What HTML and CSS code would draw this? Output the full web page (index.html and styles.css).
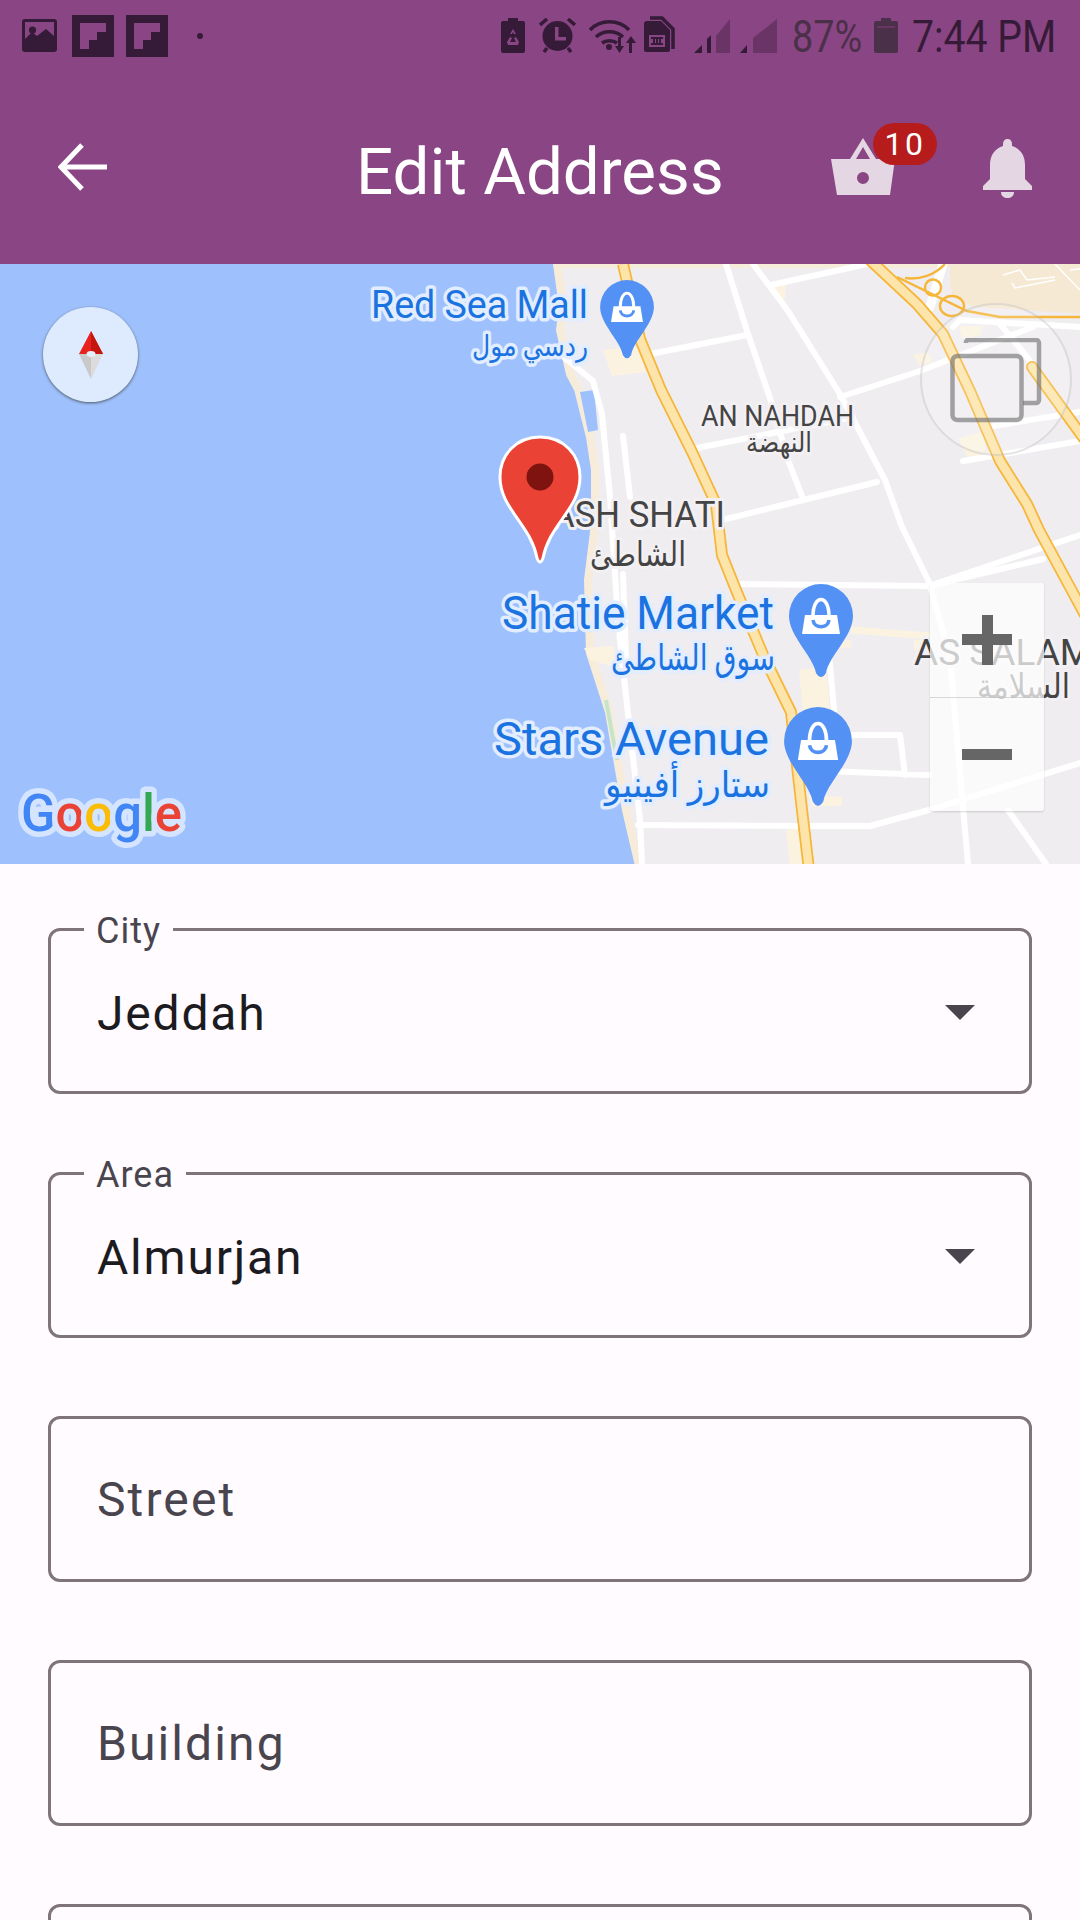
FILE: index.html
```html
<!DOCTYPE html>
<html lang="en">
<head>
<meta charset="utf-8">
<title>Edit Address</title>
<link rel="stylesheet" href="styles.css">
</head>
<body>
<div class="page">
  <header class="header">
    <div class="status">
      <div class="status-left">
        <svg class="ic-image" viewBox="0 0 35 33"><path class="dark" fill-rule="evenodd" d="M3 0h29a3 3 0 0 1 3 3v27a3 3 0 0 1-3 3H3a3 3 0 0 1-3-3V3a3 3 0 0 1 3-3zM3 3v17l7-7 5 4 9-7 8 7V3z"/><circle class="dark" cx="10.500" cy="11" r="3.600"/></svg>
        <svg class="ic-flip" viewBox="0 0 42 42"><path class="dark" fill-rule="evenodd" d="M0 0h42v42H0zM8 8v26h9v-9h8v-8h9V8z"/></svg>
        <svg class="ic-flip" viewBox="0 0 42 42"><path class="dark" fill-rule="evenodd" d="M0 0h42v42H0zM8 8v26h9v-9h8v-8h9V8z"/></svg>
        <span class="status-dot"></span>
      </div>
      <div class="status-right">
        <svg class="ic-batsave" viewBox="0 0 24 35"><path class="dark" d="M7 0h10v3h5a2 2 0 0 1 2 2v28a2 2 0 0 1-2 2H2a2 2 0 0 1-2-2V5a2 2 0 0 1 2-2h5z"/><path class="hole" d="M12 11l3 5h-2l-1-2-1 2H9zM6 24l3-5 2 1-2 4h3v3H7zM18 24l-3-5-2 1 2 4h-3v3h5z"/></svg>
        <svg class="ic-alarm" viewBox="0 0 37 35"><circle class="dark" cx="18.500" cy="18" r="15"/><path class="hole" d="M16 9h3.500v10H27v3.500H16z"/><path class="stroke-dark" d="M1 7l7-6M36 7l-7-6M5 34l3-4M32 34l-3-4"/></svg>
        <svg class="ic-wifi" viewBox="0 0 48 36"><path class="stroke-dark" d="M1 13C11 2 30 2 40 13M7 20c7-7 20-7 27 0M13 26c4-3 11-3 15 0"/><circle class="dark" cx="20" cy="30" r="3"/><path class="dark" d="M29 20h3v9h3l-4.500 7-4.500-7h3zM40 36h3v-10h4l-5-7-5 7h3z"/></svg>
        <svg class="ic-sim" viewBox="0 0 31 36"><path class="stroke-dark" d="M6 2h12l11 11v20" fill="none"/><path class="dark" d="M3 5h14l9 9v20a2 2 0 0 1-2 2H2a2 2 0 0 1-2-2V8a3 3 0 0 1 3-3z"/><path class="hole" fill-rule="evenodd" d="M5 19h16v12H5zM7 21v2h2v4H7v2h12v-2h-2v-4h2v-2zM11 23h1v4h-1zM14 23h1v4h-1z"/></svg>
        <svg class="ic-sig" viewBox="0 0 37 36"><path class="dim" d="M22 19L36 2v34H22z"/><path class="dark" d="M0 36l8-8v8zM13 36V22l4-4v18z"/></svg>
        <svg class="ic-sig ic-sig-2" viewBox="0 0 37 36"><path class="dim" d="M13 21L37 2v34H13z"/><path class="dark" d="M0 36l7-8v8z"/></svg>
        <span class="status-pct">87%</span>
        <svg class="ic-battery" viewBox="0 0 24 35"><path class="bat" d="M7 0h10v3h5a2 2 0 0 1 2 2v28a2 2 0 0 1-2 2H2a2 2 0 0 1-2-2V5a2 2 0 0 1 2-2h5z"/><rect class="bat-line" x="3" y="8" width="18" height="2"/></svg>
        <span class="status-time">7:44 PM</span>
      </div>
    </div>
    <div class="appbar">
      <svg class="ic-back" viewBox="0 0 50 48"><path d="M49 24H4M24 2L3 24l21 22"/></svg>
      <h1 class="title">Edit Address</h1>
      <div class="cart">
        <svg class="ic-basket" viewBox="0 0 64 57"><path class="basket-body" fill-rule="evenodd" d="M0 21h19L32 0l13 21h19l-5 36H6zM25 21h14L32 9zM32 34a6 6 0 1 0 0 12 6 6 0 0 0 0-12z"/></svg>
        <span class="badge">10</span>
      </div>
      <svg class="ic-bell" viewBox="0 0 49 59"><path d="M24.500 0c-3 0-4.500 2-4.500 5v2C11 10 7 17 7 26v14L0 47v4h49v-4l-7-7V26c0-9-4-16-13-19V5c0-3-1.500-5-4.500-5zM18 53h13c0 4-3 6-6.500 6S18 57 18 53z"/></svg>
    </div>
  </header>

  <section class="map">
    <svg class="map-canvas" viewBox="0 264 1080 600">
      <rect x="0" y="264" width="1080" height="600" class="water"/>
      <path class="land" d="M557 264L563 307 560 330 570 374 578 389 590 437 595 470 595 524 588 580 590 653 609 712 626 810 640 870H1085V264z"/>
      <path class="water" d="M580 392L594 390 598 430 588 432z"/>
      <path class="campus" d="M950 264H1085V314L973 307 953 297 950 284z"/>
      <path class="campus-line" d="M1003 275L1020 270 1027 280 1055 277M1012 283L1015 288 1055 280M1055 264L1080 290M1070 270L1085 268"/>
      <path class="tan" d="M603 350L640 346 645 372 612 376zM913 355L928 352 932 362 920 366zM959 326L983 326 980 336 962 338zM958 438L986 431 984 458 970 461zM799 670L826 667 830 712 803 712zM584 648L613 646 618 668 590 660zM786 830L806 826 808 864 790 864zM808 795L842 797 842 806 812 806zM772 286L786 284 784 304zM914 640L928 640 928 650 914 650z"/>
      <path class="road-tan" d="M851 630L930 636M829 644L851 644"/>
      <path class="green" d="M606 700L617 760M556 300L566 320"/>
      <g class="roads">
        <path d="M560 354L593 381 602 414 610 497 618 620 622 660 640 820 642 864"/>
        <path d="M623 436L630 497M623 574L626 660"/>
        <path d="M726 264L747 331 770 398 788 460 802 496"/>
        <path d="M753 264L788 311 840 394 885 480 902 527 929 582 950 657 968 864"/>
        <path d="M650 354L747 335M771 285L867 264M692 449L853 417M840 397L920 371 1033 327M722 520L877 482"/>
        <path d="M736 584L929 586 1043 559M929 586L1080 535"/>
        <path d="M638 825L808 826 870 826 929 810 1080 763"/>
        <path d="M847 735L900 735 905 775M826 771L929 775M829 654L836 732"/>
        <path d="M953 327L960 320 1080 327M1000 324L1027 357M1027 357L1080 434M1008 810L1046 864"/>
        <path d="M987 427L1080 412M963 461L1080 441"/>
      </g>
      <path class="road-thick" d="M943 264L930 307"/>
      <path class="loops" d="M897 277L967 311 1000 317H1085M905 278C920 280 935 275 945 264M925 287a8 8 0 1 0 16 1a8 8 0 1 0-16-1M940 305a12 10 0 1 0 24 2a12 10 0 1 0-24-2"/>
      <path class="hw-edge" d="M623 264L640 339 661 390 692 452 716 504 722 555 736 590 764 657 791 712 802 810 809 870"/>
      <path class="hw-fill" d="M623 264L640 339 661 390 692 452 716 504 722 555 736 590 764 657 791 712 802 810 809 870"/>
      <path class="hw-edge" d="M870 260L917 304 943 334 970 391 1000 461 1027 504 1039 530 1085 615"/>
      <path class="hw-fill" d="M870 260L917 304 943 334 970 391 1000 461 1027 504 1039 530 1085 615"/>
      <path class="hw-edge hw-cap" d="M1032 367L1085 440"/>
      <path class="hw-fill hw-cap" d="M1032 367L1085 440"/>

      <text class="lbl-poi lbl-md" x="371" y="318" textLength="217" lengthAdjust="spacingAndGlyphs">Red Sea Mall</text>
      <text class="lbl-poi lbl-ar-sm" x="472" y="356" textLength="116" lengthAdjust="spacingAndGlyphs">ردسي مول</text>
      <text class="lbl-area" x="701" y="426" textLength="153" lengthAdjust="spacingAndGlyphs">AN NAHDAH</text>
      <text class="lbl-area-ar" x="746" y="452" textLength="66" lengthAdjust="spacingAndGlyphs">النهضة</text>
      <text class="lbl-area lbl-area-lg" x="552" y="527" textLength="173" lengthAdjust="spacingAndGlyphs">ASH SHATI</text>
      <text class="lbl-area-ar lbl-area-ar-lg" x="590" y="566" textLength="96" lengthAdjust="spacingAndGlyphs">الشاطئ</text>
      <text class="lbl-poi lbl-lg" x="502" y="629" textLength="272" lengthAdjust="spacingAndGlyphs">Shatie Market</text>
      <text class="lbl-poi lbl-ar-lg" x="611" y="670" textLength="164" lengthAdjust="spacingAndGlyphs">سوق الشاطئ</text>
      <text class="lbl-poi lbl-lg" x="494" y="755" textLength="275" lengthAdjust="spacingAndGlyphs">Stars Avenue</text>
      <text class="lbl-poi lbl-ar-lg" x="605" y="797" textLength="165" lengthAdjust="spacingAndGlyphs">ستارز أفينيو</text>
      <text class="lbl-area lbl-area-lg" x="914" y="665">AS SALAM</text>
      <text class="lbl-area-ar lbl-area-ar-lg" x="977" y="698" textLength="93" lengthAdjust="spacingAndGlyphs">السلامة</text>

      <g transform="translate(627 307) scale(.84)"><use href="#pin"/></g>
      <g transform="translate(821 616)"><use href="#pin"/></g>
      <g transform="translate(818 741) scale(1.06)"><use href="#pin"/></g>
      <defs>
        <g id="pin">
          <path class="pin-blue" d="M0-32A32 32 0 0 1 32 0C32 20 8 40 5 57Q0 65-5 57C-8 40-32 20-32 0A32 32 0 0 1 0-32z"/>
          <path class="pin-handle" d="M-8 0C-8-22 8-22 8 0"/>
          <path class="pin-bag" d="M-16-1H16L19 18H-19z"/>
          <path class="pin-smile" d="M-8 4C-7 13 7 13 8 4"/>
        </g>
      </defs>

      <path class="marker" d="M540 437C516 437 500 455 500 477C500 509 530 523 537 558Q540 566 543 558C550 523 580 509 580 477C580 455 564 437 540 437z"/>
      <circle class="marker-dot" cx="540" cy="477" r="13.500"/>

      <text class="google" x="21" y="831" textLength="161" lengthAdjust="spacingAndGlyphs"><tspan class="g-blue">G</tspan><tspan class="g-red">o</tspan><tspan class="g-yellow">o</tspan><tspan class="g-blue">g</tspan><tspan class="g-green">l</tspan><tspan class="g-red">e</tspan></text>
    </svg>

    <div class="compass">
      <svg class="needle" viewBox="0 0 24 48"><path d="M12 0L24 23H0z" fill="#e8211d"/><path d="M12 0L24 23H12z" fill="#c4160f"/><path d="M0 23L12 48V23z" fill="#c9c9c9"/><path d="M24 23L12 48V23z" fill="#dcdcdc"/><ellipse cx="12" cy="23" rx="4.500" ry="3" fill="#e6eefc"/></svg>
    </div>

    <div class="layers">
      <svg viewBox="0 0 92 85" class="layers-ic"><path d="M16 5v-1a2 2 0 0 1 2-2h68a3 3 0 0 1 3 3v57a3 3 0 0 1-3 3H73"/><rect x="2.500" y="18" width="69" height="64" rx="5"/></svg>
    </div>

    <div class="zoom">
      <button class="zoom-btn" type="button"><span class="zoom-plus"></span></button>
      <button class="zoom-btn" type="button"><span class="zoom-minus"></span></button>
    </div>
  </section>

  <form class="form">
    <div class="field"><span class="field-label">City</span><span class="field-value">Jeddah</span><span class="caret"></span></div>
    <div class="field"><span class="field-label">Area</span><span class="field-value">Almurjan</span><span class="caret"></span></div>
    <div class="field"><span class="field-hint">Street</span></div>
    <div class="field"><span class="field-hint">Building</span></div>
    <div class="field"></div>
  </form>
</div>
</body>
</html>
```

FILE: styles.css
```css
* { box-sizing: border-box; }
html, body { margin: 0; padding: 0; }
body { background: #fffbfe; font-family: Roboto, "Noto Sans", sans-serif; }
.page { width: 1080px; height: 1920px; overflow: hidden; display: flex; flex-direction: column; }

/* header */
.header { height: 264px; background: #8a4584; flex: none; display: flex; flex-direction: column; }
.status { height: 70px; display: flex; justify-content: space-between; align-items: flex-start; }
.status-left { display: flex; align-items: flex-start; padding: 15px 0 0 22px; }
.status-right { display: flex; align-items: flex-start; padding: 16px 27px 0 0; }
.dark { fill: #361b38; }
.dim { fill: #6b3467; }
.hole { fill: #8a4584; }
.bat { fill: #4a3049; }
.bat-line { fill: #6b3467; }
.stroke-dark { fill: none; stroke: #361b38; stroke-width: 3.500; }
.ic-image { width: 35px; height: 33px; margin-top: 4px; }
.ic-flip { width: 42px; height: 42px; margin-left: 15px; }
.ic-flip + .ic-flip { margin-left: 12px; }
.status-dot { width: 6px; height: 6px; border-radius: 50%; background: #361b38; margin: 18px 0 0 29px; }
.ic-batsave { width: 24px; height: 35px; margin-top: 2px; }
.ic-alarm { width: 37px; height: 35px; margin: 2px 0 0 14px; }
.ic-wifi { width: 48px; height: 36px; margin: 1px 0 0 13px; }
.ic-sim { width: 31px; height: 36px; margin: 0 0 0 7px; }
.ic-sig { width: 37px; height: 36px; margin: 1px 0 0 19px; }
.ic-sig-2 { margin-left: 9px; }
.status-pct { font-size: 45px; line-height: 42px; margin: 0 0 0 15px; color: #4a3049; width: 70px; white-space: nowrap; transform: scaleX(.84); transform-origin: left center; }
.ic-battery { width: 24px; height: 35px; margin: 2px 0 0 12px; }
.status-time { font-size: 45px; line-height: 42px; margin-left: 14px; width: 141px; color: #361b38; white-space: nowrap; transform: scaleX(.87); transform-origin: left center; }

.appbar { position: relative; flex: 1; display: flex; align-items: flex-start; padding-left: 58px; }
.ic-back { width: 50px; height: 48px; margin-top: 73px; fill: none; stroke: #fff; stroke-width: 5; flex: none; }
.title { margin: 65px 0 0 248px; font-weight: 400; font-size: 65.500px; line-height: 74px; color: #fff; width: 367px; flex: none; white-space: nowrap; }
.cart { position: relative; width: 64px; height: 57px; margin: 68px 0 0 108px; flex: none; }
.ic-basket { width: 64px; height: 57px; display: block; }
.basket-body { fill: #e4d6e3; }
.badge { position: absolute; left: 42px; top: -15px; width: 64px; height: 42px; border-radius: 21px; background: #b71c1c; color: #fff; font-size: 32px; line-height: 42px; text-align: center; letter-spacing: 2.500px; }
.ic-bell { width: 49px; height: 59px; margin: 69px 0 0 88px; fill: #e4d6e3; flex: none; }

/* map */
.map { position: relative; height: 600px; flex: none; overflow: hidden; }
.map-canvas { display: block; width: 1080px; height: 600px; }
.water { fill: #9ec1fd; }
.land { fill: #f0edf1; stroke: #f6ecd9; stroke-width: 8px; stroke-linejoin: round; }
.campus { fill: #f6e9d3; }
.campus-line { fill: none; stroke: #fff; stroke-width: 1.500px; }
.tan { fill: #fbf3e0; }
.road-tan { fill: none; stroke: #fbf3e0; stroke-width: 7px; }
.green { fill: none; stroke: #c6e4c8; stroke-width: 4px; }
.roads path { fill: none; stroke: #fff; stroke-width: 6px; stroke-linecap: round; stroke-linejoin: round; }
.road-thick { fill: none; stroke: #fff; stroke-width: 9px; stroke-linecap: round; }
.loops { fill: none; stroke: #f5b63a; stroke-width: 2.500px; }
.hw-edge { fill: none; stroke: #f5b63a; stroke-width: 12px; stroke-linejoin: round; }
.hw-fill { fill: none; stroke: #fde4ab; stroke-width: 8.500px; stroke-linejoin: round; }
.hw-cap { stroke-linecap: round; }

.map-canvas text { paint-order: stroke fill; stroke-linejoin: round; font-family: Roboto, "DejaVu Sans", sans-serif; }
.lbl-poi { fill: #1a73e0; stroke: #e2edff; stroke-width: 7px; }
.lbl-md { font-size: 38px; }
.lbl-lg { font-size: 46px; }
.lbl-ar-sm { font-size: 29px; }
.lbl-ar-lg { font-size: 36px; }
.lbl-area { fill: #444; stroke: #f3f0f3; stroke-width: 6px; font-size: 30px; }
.lbl-area-lg { font-size: 37px; }
.lbl-area-ar { fill: #444; stroke: #f3f0f3; stroke-width: 6px; font-size: 28px; }
.lbl-area-ar-lg { font-size: 34px; }
.pin-blue { fill: #5491f5; }
.pin-bag { fill: #fff; }
.pin-handle { fill: none; stroke: #fff; stroke-width: 3.500; }
.pin-smile { fill: none; stroke: #5491f5; stroke-width: 3.500; }
.marker { fill: #ea4335; stroke: #fff; stroke-width: 3; }
.marker-dot { fill: #7e1310; }
.google { font-size: 52px; font-weight: 500; stroke: #d6e5ff; stroke-width: 11px; }
.g-blue { fill: #4285f4; }
.g-red { fill: #ea4335; }
.g-yellow { fill: #fbbc05; }
.g-green { fill: #34a853; }

.compass { position: absolute; left: 43px; top: 43px; width: 95px; height: 95px; border-radius: 50%; background: #deebff; box-shadow: 0 1px 3px rgba(60, 60, 60, .8); display: flex; align-items: center; justify-content: center; }
.needle { width: 24px; height: 48px; display: block; }
.layers { position: absolute; left: 920px; top: 39px; width: 152px; height: 153px; border-radius: 50%; background: rgba(255, 255, 255, .16); border: 2px solid rgba(170, 170, 170, .3); }
.layers-ic { position: absolute; left: 28px; top: 33px; width: 92px; height: 85px; fill: none; stroke: rgba(110, 110, 110, .62); stroke-width: 4.500; }
.zoom { position: absolute; left: 930px; top: 319px; width: 114px; height: 228px; border-radius: 3px; background: rgba(255, 255, 255, .72); box-shadow: 0 1px 2px rgba(0, 0, 0, .15); display: flex; flex-direction: column; }
.zoom-btn { flex: 1; padding: 0; border: 0; background: none; display: flex; align-items: center; justify-content: center; }
.zoom-btn + .zoom-btn { border-top: 1px solid rgba(190, 190, 190, .6); }
.zoom-plus { width: 50px; height: 50px; background: linear-gradient(#666, #666) center / 100% 11px no-repeat, linear-gradient(#666, #666) center / 11px 100% no-repeat; }
.zoom-minus { width: 50px; height: 11px; background: #666; }

/* form */
.form { display: flex; flex-direction: column; gap: 78px; padding: 64px 48px 0; }
.field { position: relative; flex: none; height: 166px; border: 3px solid #7f7579; border-radius: 12px; display: flex; align-items: center; justify-content: space-between; padding: 0 54px 0 46px; font-size: 48px; letter-spacing: 2px; }
.field-label { position: absolute; left: 33px; top: -22px; padding: 0 12px; background: #fffbfe; color: #49454f; font-size: 36px; line-height: 44px; letter-spacing: 1px; }
.field-value { color: #1c1b1f; padding-top: 5px; letter-spacing: 1.800px; }
.field-hint { color: #49454f; padding-top: 1px; letter-spacing: 2.100px; }
.caret { width: 0; height: 0; border-left: 15px solid transparent; border-right: 15px solid transparent; border-top: 15px solid #49454f; margin-top: 2px; }
```
